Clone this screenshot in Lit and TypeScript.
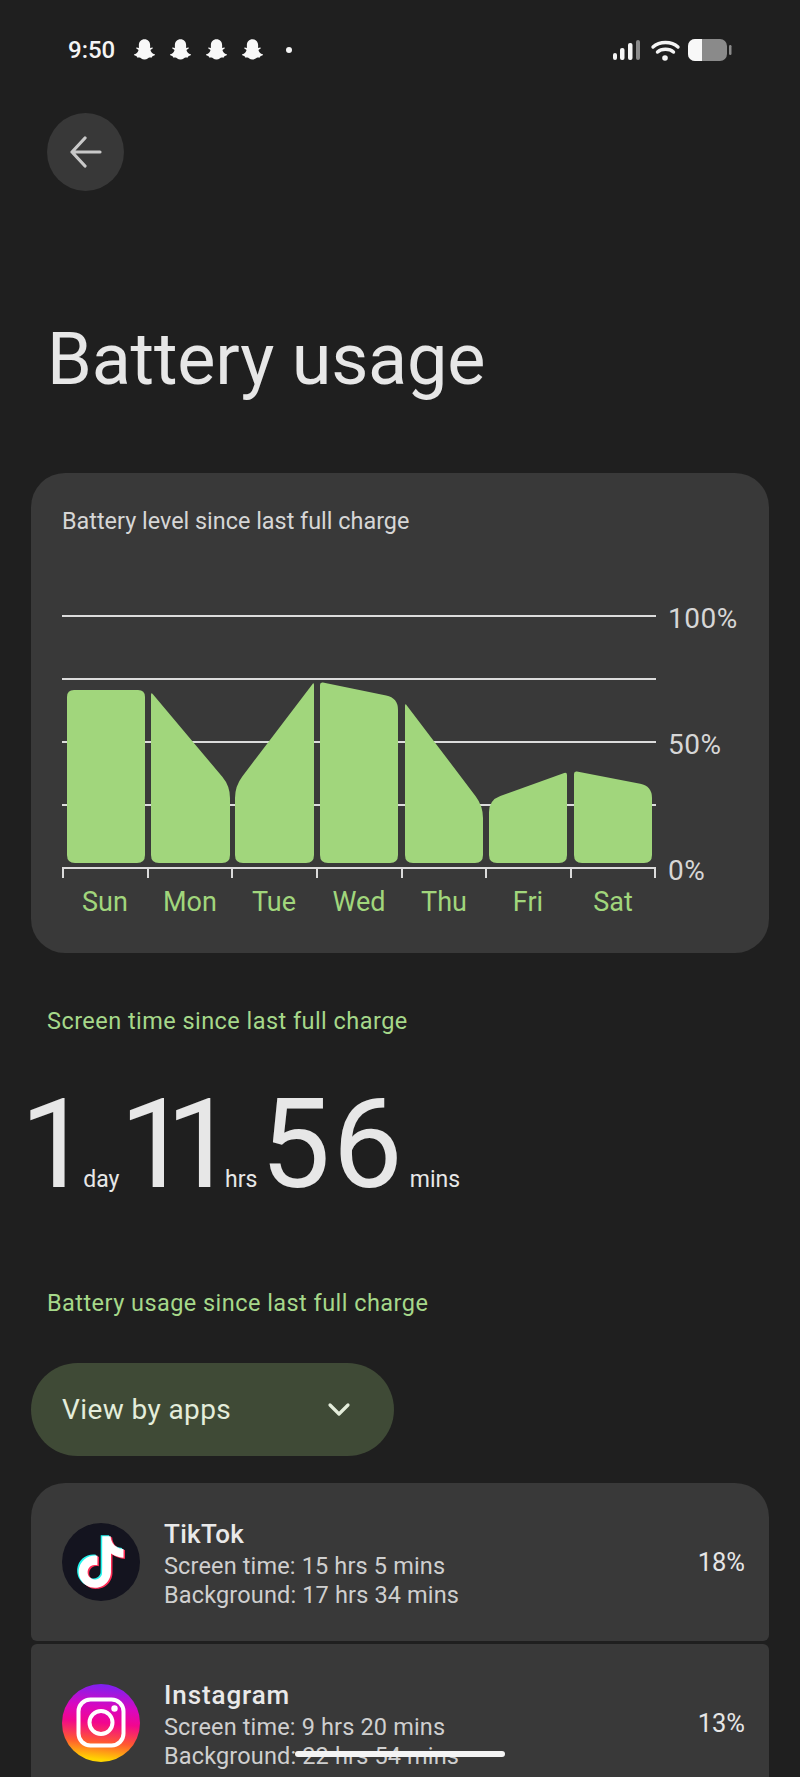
import { LitElement, html, css, svg } from "lit";
import { customElement } from "lit/decorators.js";

type Pt = [number, number];

function rounded(pts: Pt[], radii: number[]): string {
  let d = "";
  const n = pts.length;
  for (let i = 0; i < n; i++) {
    const p = pts[i];
    const a = pts[(i - 1 + n) % n];
    const b = pts[(i + 1) % n];
    const r = radii[i];
    const la = Math.hypot(a[0] - p[0], a[1] - p[1]);
    const lb = Math.hypot(b[0] - p[0], b[1] - p[1]);
    const s: Pt = [p[0] + ((a[0] - p[0]) * r) / la, p[1] + ((a[1] - p[1]) * r) / la];
    const e: Pt = [p[0] + ((b[0] - p[0]) * r) / lb, p[1] + ((b[1] - p[1]) * r) / lb];
    d += `${i === 0 ? "M" : "L"}${s[0].toFixed(1)} ${s[1].toFixed(1)}Q${p[0]} ${p[1]} ${e[0].toFixed(1)} ${e[1].toFixed(1)}`;
  }
  return d + "Z";
}

const BOTTOM = 863;
const bars = [
  { d: "Sun", x0: 67, x1: 145, l: 690, r: 690, cx: 105 },
  { d: "Mon", x0: 151, x1: 230, l: 692, r: 786, cx: 190 },
  { d: "Tue", x0: 235, x1: 314, l: 786, r: 682, cx: 274 },
  { d: "Wed", x0: 320, x1: 398, l: 682, r: 698, cx: 359 },
  { d: "Thu", x0: 405, x1: 483, l: 703, r: 806, cx: 444 },
  { d: "Fri", x0: 489, x1: 567, l: 800, r: 772, cx: 528 },
  { d: "Sat", x0: 574, x1: 652, l: 771, r: 786, cx: 613 },
];
const ticks = [63, 148, 232, 317, 402, 486, 571, 655];
const grid = [616, 679, 742, 805];
const levels: [string, number][] = [["100%", 618], ["50%", 744], ["0%", 870]];

const TIKTOK =
  "M12.525.02c1.31-.02 2.61-.01 3.91-.02.08 1.53.63 3.09 1.75 4.17 1.12 1.11 2.7 1.62 4.24 1.79v4.03c-1.44-.05-2.89-.35-4.2-.97-.57-.26-1.1-.59-1.62-.93-.01 2.92.01 5.84-.02 8.75-.08 1.4-.54 2.79-1.35 3.94-1.31 1.92-3.58 3.17-5.91 3.21-1.43.08-2.86-.31-4.08-1.03-2.02-1.19-3.44-3.37-3.65-5.71-.02-.5-.03-1-.01-1.49.18-1.9 1.12-3.72 2.58-4.96 1.66-1.44 3.98-2.13 6.15-1.72.02 1.48-.04 2.96-.04 4.44-.99-.32-2.15-.23-3.02.37-.63.41-1.11 1.04-1.36 1.75-.21.51-.15 1.07-.14 1.61.24 1.64 1.82 3.02 3.5 2.87 1.12-.01 2.19-.66 2.77-1.61.19-.33.4-.67.41-1.06.1-1.79.06-3.57.07-5.36.01-4.03-.01-8.05.02-12.07z";
const GHOST =
  "M12 2c3 0 5 2.2 5 5.2v2.6l1.8-.5c.6 0 .8.6.4 1l-1.9 1.2c.4 1.8 1.8 3.2 3.7 3.9.5.2.5.7 0 .9l-2 .7-.5 1.3-2-.1c-1 0-2 1.8-4.5 1.8s-3.5-1.8-4.5-1.8l-2 .1-.5-1.3-2-.7c-.5-.2-.5-.7 0-.9 1.9-.7 3.3-2.1 3.7-3.9L4.8 10.3c-.4-.4-.2-1 .4-1l1.8.5V7.2C7 4.2 9 2 12 2z";

@customElement("app-root")
export class AppRoot extends LitElement {
  static styles = css`
    :host {
      display: block;
      position: relative;
      width: 800px;
      height: 1777px;
      overflow: hidden;
      background: #1f1f1f;
      font-family: Roboto, "Liberation Sans", sans-serif;
      color: #e6e6e6;
    }
    .status {
      height: 100px;
      box-sizing: border-box;
      padding: 0 68px;
      display: flex;
      align-items: center;
      justify-content: space-between;
    }
    .status-left { display: flex; align-items: center; }
    .time { font-size: 24px; font-weight: 500; color: #f4f4f4; width: 62.5px; }
    .ghost { width: 27px; height: 27px; margin-right: 9px; display: block; }
    .dot { width: 6px; height: 6px; border-radius: 50%; background: #f4f4f4; margin-left: 11.5px; }
    .status-right { display: block; width: 120px; height: 24px; }
    .back {
      margin: 13px 0 0 47px;
      width: 77px;
      height: 78px;
      border-radius: 50%;
      background: #383838;
      display: flex;
      align-items: center;
      justify-content: center;
    }
    .back svg { width: 34px; height: 32px; display: block; }
    h1 {
      margin: 127px 0 0 47px;
      font-size: 72px;
      line-height: 84px;
      font-weight: 400;
      color: #e7e7e7;
      letter-spacing: -0.2px;
    }
    .card-chart {
      margin: 71px 31px 0;
      height: 480px;
      border-radius: 34px;
      background: #393939;
      box-sizing: border-box;
      padding-top: 35px;
    }
    .card-title {
      margin: 0 0 0 31px;
      font-size: 23.4px;
      line-height: 27px;
      color: #d6d6d6;
      font-weight: 400;
    }
    .chart { display: block; width: 738px; height: 340px; margin-top: 55px; }
    .grid { stroke: #dcdcdc; stroke-width: 2; }
    .bar { fill: #a1d67c; }
    .lvl { font-size: 28px; fill: #d6d6d6; letter-spacing: 0.5px; }
    .day { font-size: 27px; fill: #a1d67c; }
    .label {
      margin: 0 0 0 47px;
      font-size: 23.5px;
      line-height: 28px;
      color: #a6d88a;
      font-weight: 400;
      letter-spacing: 0.45px;
    }
    .label.first { margin-top: 54px; }
    .stats {
      margin: 50px 0 0 20px;
      display: flex;
      align-items: baseline;
      height: 112px;
    }
    .num { font-size: 125px; line-height: 119px; font-weight: 400; color: #e7e7e7; }
    .num.ones { letter-spacing: -24px; }
    .num.wide { letter-spacing: 2px; }
    .unit { font-size: 23px; color: #e7e7e7; }
    .unit.day-u { margin: 0 0 0 17px; }
    .unit.hrs-u { margin: 0 3px 0 13px; }
    .unit.min-u { margin-left: 5px; }
    .label.second { margin-top: 92px; }
    .pill {
      margin: 46px 0 0 31px;
      width: 363px;
      height: 93px;
      border-radius: 47px;
      background: #3f4a36;
      box-sizing: border-box;
      padding: 0 43px 0 31px;
      display: flex;
      align-items: center;
      justify-content: space-between;
      font-size: 28px;
      letter-spacing: 0.4px;
      color: #e4eddb;
    }
    .pill svg { width: 24px; height: 16px; display: block; }
    .list { margin: 27px 31px 0; display: flex; flex-direction: column; gap: 3px; }
    .row {
      background: #393939;
      box-sizing: border-box;
      height: 158px;
      padding: 40px 24px 0 31px;
      display: flex;
      align-items: flex-start;
      border-radius: 6px;
    }
    .row.top { border-radius: 34px 34px 6px 6px; }
    .row.next { height: 200px; }
    .icon { width: 78px; height: 78px; display: block; flex: none; }
    .info { margin-left: 24px; flex: 1; margin-top: -7px; }
    .name { font-size: 26px; line-height: 36px; font-weight: 500; color: #e9e9e9; letter-spacing: 0.3px; }
    .row.next .name { letter-spacing: 0.9px; }
    .sub { font-size: 23.5px; line-height: 29px; color: #cfcfcf; letter-spacing: 0.15px; }
    .pct { font-size: 25.5px; font-weight: 400; color: #e6e6e6; line-height: 29px; margin-top: 25px; }
    .home {
      position: absolute;
      left: 295px;
      top: 1751px;
      width: 210px;
      height: 6px;
      border-radius: 3px;
      background: #f4f4f4;
    }
  `;

  private statusIcons() {
    return html`<svg class="status-right" viewBox="612 38 120 24">
      <rect x="613" y="53" width="4" height="7" rx="2" fill="#f4f4f4" />
      <rect x="620" y="48" width="4.5" height="12" rx="2" fill="#f4f4f4" />
      <rect x="628" y="43" width="4.5" height="17" rx="2" fill="#f4f4f4" />
      <rect x="636" y="40" width="4" height="20" rx="2" fill="#8a8a8a" />
      <path d="M653 47c6.5-6 18.5-6 25 0M657.5 52c4-3.6 12-3.6 16 0" fill="none" stroke="#f4f4f4" stroke-width="3.4" stroke-linecap="round" />
      <circle cx="665" cy="58" r="2.8" fill="#f4f4f4" />
      <rect x="688" y="39" width="39" height="22" rx="7" fill="#8a8a8a" />
      <path d="M702 39h-7a7 7 0 0 0-7 7v8a7 7 0 0 0 7 7h7z" fill="#f8f8f8" />
      <rect x="729" y="45" width="2.5" height="10" rx="1.2" fill="#8a8a8a" />
    </svg>`;
  }

  private chart() {
    return html`<svg class="chart" viewBox="31 590 738 340">
      ${grid.map((y) => svg`<line class="grid" x1="62" x2="656" y1=${y} y2=${y} />`)}
      <line class="grid" x1="62" x2="656" y1="868" y2="868" />
      ${ticks.map((x) => svg`<line class="grid" x1=${x} x2=${x} y1="868" y2="878" />`)}
      ${bars.map((b) => {
        const flat = b.l === b.r;
        const radii = [flat ? 7 : b.l > b.r ? 12 : 3, flat ? 7 : b.r > b.l ? 12 : 3, 8, 8];
        return svg`<path class="bar" d=${rounded(
          [[b.x0, b.l], [b.x1, b.r], [b.x1, BOTTOM], [b.x0, BOTTOM]],
          radii
        )} />`;
      })}
      ${levels.map(([t, y]) => svg`<text class="lvl" x="668" y=${y + 10}>${t}</text>`)}
      ${bars.map((b) => svg`<text class="day" x=${b.cx} y="911" text-anchor="middle">${b.d}</text>`)}
    </svg>`;
  }

  private tiktok() {
    return html`<svg class="icon" viewBox="0 0 78 78">
      <circle cx="39" cy="39" r="39" fill="#14141f" />
      <g transform="translate(13.3 13.2) scale(2.15)">
        <path d=${TIKTOK} fill="#25f4ee" transform="translate(-.7 -.5)" />
        <path d=${TIKTOK} fill="#fe2c55" transform="translate(.7 .5)" />
        <path d=${TIKTOK} fill="#ffffff" />
      </g>
    </svg>`;
  }

  private instagram() {
    return html`<svg class="icon" viewBox="0 0 78 78">
      <defs>
        <linearGradient id="ig" x1="0.6" y1="0" x2="0.5" y2="1">
          <stop offset="0" stop-color="#7a22f2" />
          <stop offset="0.3" stop-color="#d908c0" />
          <stop offset="0.5" stop-color="#f2068e" />
          <stop offset="0.75" stop-color="#ff5a30" />
          <stop offset="0.97" stop-color="#ffd400" />
        </linearGradient>
      </defs>
      <circle cx="39" cy="39" r="39" fill="url(#ig)" />
      <rect x="16.5" y="15.5" width="45" height="46" rx="12" fill="none" stroke="#fff" stroke-width="4" />
      <circle cx="39" cy="38.5" r="11.5" fill="none" stroke="#fff" stroke-width="4" />
      <circle cx="52.5" cy="24.5" r="3.2" fill="#fff" />
    </svg>`;
  }

  render() {
    return html`
      <div class="status">
        <div class="status-left">
          <span class="time">9:50</span>
          ${[0, 1, 2, 3].map(() => html`<svg class="ghost" viewBox="0 0 24 24"><path d=${GHOST} fill="#f8f8f8" /></svg>`)}
          <span class="dot"></span>
        </div>
        ${this.statusIcons()}
      </div>
      <div class="back">
        <svg viewBox="0 0 34 32"><path d="M31 16H3M16 2L3 16l13 14" fill="none" stroke="#c9c9c9" stroke-width="3.2" stroke-linecap="round" stroke-linejoin="round" /></svg>
      </div>
      <h1>Battery usage</h1>
      <section class="card-chart">
        <p class="card-title">Battery level since last full charge</p>
        ${this.chart()}
      </section>
      <p class="label first">Screen time since last full charge</p>
      <div class="stats">
        <span class="num ones">1</span><span class="unit day-u">day</span>
        <span class="num ones">11</span><span class="unit hrs-u">hrs</span>
        <span class="num wide">56</span><span class="unit min-u">mins</span>
      </div>
      <p class="label second">Battery usage since last full charge</p>
      <div class="pill">
        <span>View by apps</span>
        <svg viewBox="0 0 24 16"><path d="M3 3l9 9 9-9" fill="none" stroke="#e4eddb" stroke-width="3.2" stroke-linecap="round" stroke-linejoin="round" /></svg>
      </div>
      <div class="list">
        <div class="row top">
          ${this.tiktok()}
          <div class="info">
            <div class="name">TikTok</div>
            <div class="sub">Screen time: 15 hrs 5 mins</div>
            <div class="sub">Background: 17 hrs 34 mins</div>
          </div>
          <div class="pct">18%</div>
        </div>
        <div class="row next">
          ${this.instagram()}
          <div class="info">
            <div class="name">Instagram</div>
            <div class="sub">Screen time: 9 hrs 20 mins</div>
            <div class="sub">Background: 22 hrs 54 mins</div>
          </div>
          <div class="pct">13%</div>
        </div>
      </div>
      <div class="home"></div>
    `;
  }
}
